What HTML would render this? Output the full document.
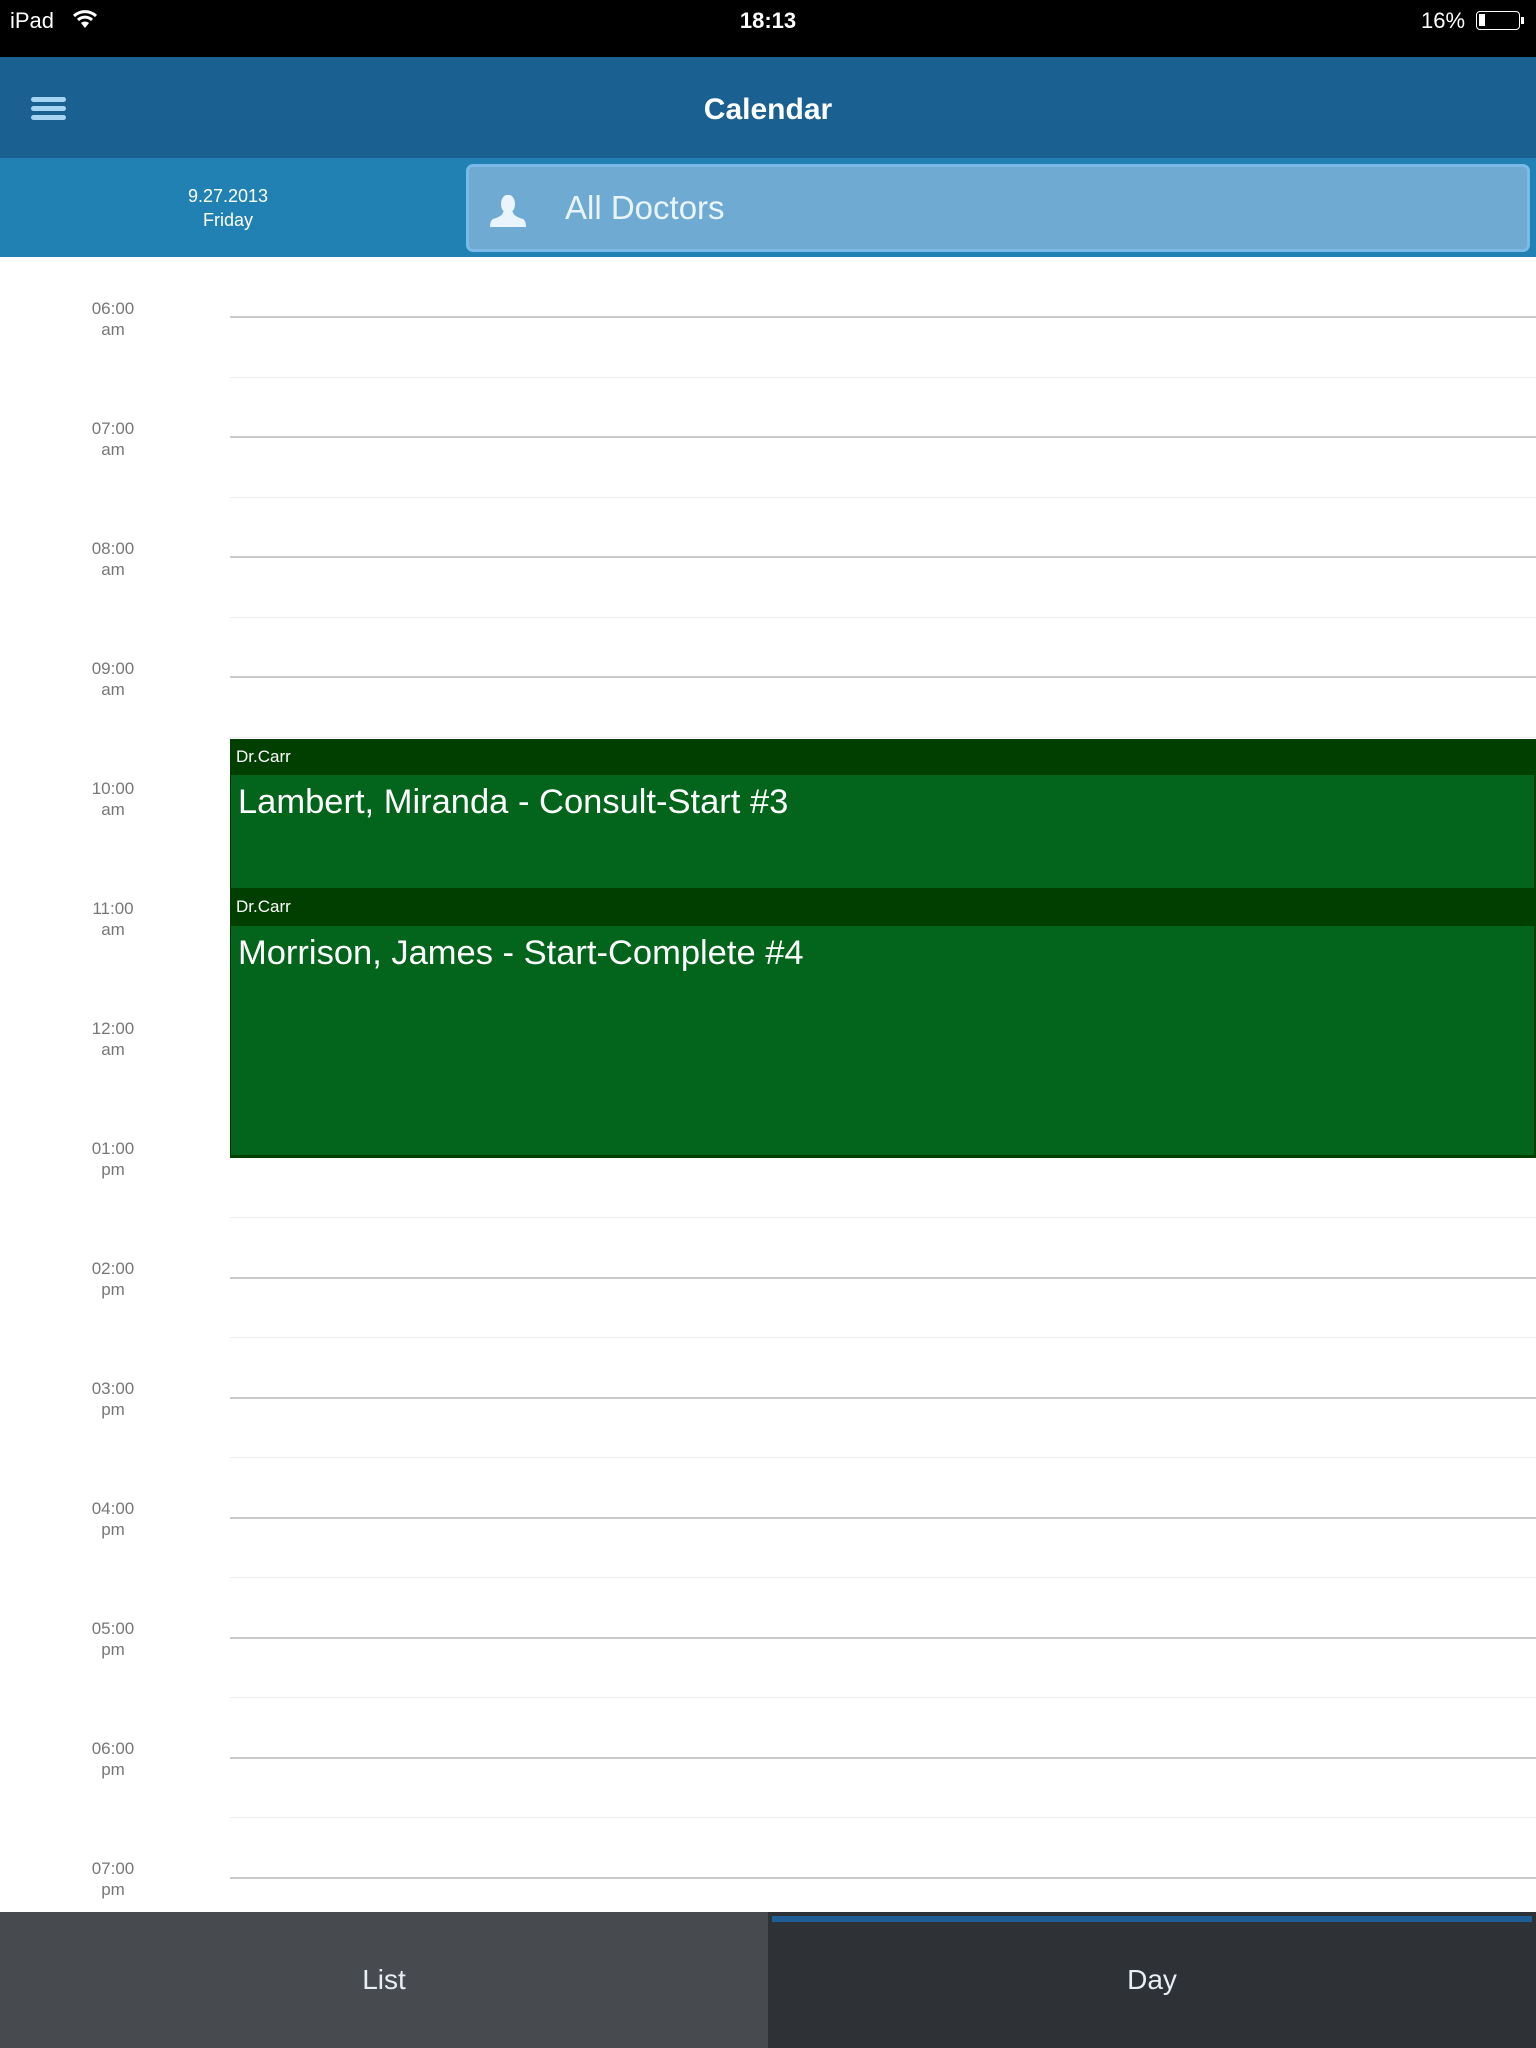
<!DOCTYPE html>
<html><head><meta charset="utf-8"><style>
*{margin:0;padding:0;box-sizing:border-box}
body{width:1536px;height:2048px;position:relative;background:#fff;font-family:"Liberation Sans",sans-serif;overflow:hidden}
.a{position:absolute}
.lbl{position:absolute;left:63px;width:100px;text-align:center;color:#777;font-size:17px;line-height:21px}
.hl{position:absolute;left:230px;right:0;height:2px;background:#c9c9c9}
.ml{position:absolute;left:230px;right:0;height:1px;background:#eeeeee}
</style></head><body>
<div class="a" style="left:0;top:0;width:1536px;height:57px;background:#000"></div>
<div class="a" style="left:10px;top:8px;color:#fff;font-size:22px">iPad</div>
<svg class="a" style="left:72px;top:9px" width="26" height="20" viewBox="0 0 26 20"><path d="M2 7 A16 16 0 0 1 24 7" stroke="#fff" stroke-width="3" fill="none"/><path d="M6 11 A10 10 0 0 1 20 11" stroke="#fff" stroke-width="3" fill="none"/><path d="M9 14 L13 19 L17 14 A6 6 0 0 0 9 14Z" fill="#fff"/></svg>
<div class="a" style="left:0;width:1536px;top:8px;text-align:center;color:#fff;font-size:22px;font-weight:bold">18:13</div>
<div class="a" style="left:1421px;top:8px;color:#fff;font-size:22px">16%</div>
<div class="a" style="left:1476px;top:11px;width:44px;height:19px;border:1.5px solid #fff;border-radius:4px"><div style="position:absolute;left:2px;top:2px;width:6px;height:12px;background:#fff"></div></div>
<div class="a" style="left:1521px;top:17px;width:3px;height:7px;background:#fff"></div>

<div class="a" style="left:0;top:57px;width:1536px;height:101px;background:#1a6090"></div>
<div class="a" style="left:31px;top:97px;width:35px;height:5px;border-radius:3px;background:#a8d4f4"></div>
<div class="a" style="left:31px;top:106px;width:35px;height:5px;border-radius:3px;background:#a8d4f4"></div>
<div class="a" style="left:31px;top:115px;width:35px;height:5px;border-radius:3px;background:#a8d4f4"></div>
<div class="a" style="left:0;width:1536px;top:93px;text-align:center;color:#fff;font-size:30px;font-weight:bold">Calendar</div>

<div class="a" style="left:0;top:158px;width:1536px;height:99px;background:#2181b3"></div>
<div class="a" style="left:128px;width:200px;top:184px;text-align:center;color:#fff;font-size:18px;line-height:24px">9.27.2013<br>Friday</div>
<div class="a" style="left:466px;top:164px;width:1064px;height:88px;background:#6eaad2;border:3px solid #7cb8e8;border-radius:7px"></div>
<svg class="a" style="left:488px;top:195px" width="42" height="32" viewBox="0 0 42 32"><ellipse cx="20" cy="9" rx="7" ry="9.5" fill="#eaf4fc"/><path d="M15 17 Q15 21 5 24 Q2 26 2 32 L38 32 Q38 26 35 24 Q25 21 25 17Z" fill="#eaf4fc"/></svg>
<div class="a" style="left:565px;top:189px;color:#eaf4fc;font-size:33px">All Doctors</div>

<div class="hl" style="top:316px"></div><div class="ml" style="top:377px"></div>
<div class="hl" style="top:436px"></div><div class="ml" style="top:497px"></div>
<div class="hl" style="top:556px"></div><div class="ml" style="top:617px"></div>
<div class="hl" style="top:676px"></div><div class="ml" style="top:737px"></div>
<div class="hl" style="top:796px"></div><div class="ml" style="top:857px"></div>
<div class="hl" style="top:916px"></div><div class="ml" style="top:977px"></div>
<div class="hl" style="top:1036px"></div><div class="ml" style="top:1097px"></div>
<div class="hl" style="top:1156px"></div><div class="ml" style="top:1217px"></div>
<div class="hl" style="top:1277px"></div><div class="ml" style="top:1337px"></div>
<div class="hl" style="top:1397px"></div><div class="ml" style="top:1457px"></div>
<div class="hl" style="top:1517px"></div><div class="ml" style="top:1577px"></div>
<div class="hl" style="top:1637px"></div><div class="ml" style="top:1697px"></div>
<div class="hl" style="top:1757px"></div><div class="ml" style="top:1817px"></div>
<div class="hl" style="top:1877px"></div>

<div class="lbl" style="top:298px">06:00<br>am</div>
<div class="lbl" style="top:418px">07:00<br>am</div>
<div class="lbl" style="top:538px">08:00<br>am</div>
<div class="lbl" style="top:658px">09:00<br>am</div>
<div class="lbl" style="top:778px">10:00<br>am</div>
<div class="lbl" style="top:898px">11:00<br>am</div>
<div class="lbl" style="top:1018px">12:00<br>am</div>
<div class="lbl" style="top:1138px">01:00<br>pm</div>
<div class="lbl" style="top:1258px">02:00<br>pm</div>
<div class="lbl" style="top:1378px">03:00<br>pm</div>
<div class="lbl" style="top:1498px">04:00<br>pm</div>
<div class="lbl" style="top:1618px">05:00<br>pm</div>
<div class="lbl" style="top:1738px">06:00<br>pm</div>
<div class="lbl" style="top:1858px">07:00<br>pm</div>

<div class="a" style="left:230px;top:739px;width:1306px;height:419px;background:#003f00"></div>
<div class="a" style="left:231px;top:775px;width:1303px;height:113px;background:#03651b"></div>
<div class="a" style="left:231px;top:926px;width:1303px;height:229px;background:#03651b"></div>
<div class="a" style="left:236px;top:747px;color:#fff;font-size:17px">Dr.Carr</div>
<div class="a" style="left:238px;top:783px;color:#fff;font-size:34.5px">Lambert, Miranda - Consult-Start #3</div>
<div class="a" style="left:236px;top:897px;color:#fff;font-size:17px">Dr.Carr</div>
<div class="a" style="left:238px;top:934px;color:#fff;font-size:34.5px">Morrison, James - Start-Complete #4</div>

<div class="a" style="left:0;top:1912px;width:768px;height:136px;background:#474b50"></div>
<div class="a" style="left:768px;top:1912px;width:768px;height:136px;background:#2e3135"></div>
<div class="a" style="left:772px;top:1916px;width:760px;height:6px;background:#1f5d96"></div>
<div class="a" style="left:0;width:768px;top:1964px;text-align:center;color:#e8eef4;font-size:28px">List</div>
<div class="a" style="left:768px;width:768px;top:1964px;text-align:center;color:#e8eef4;font-size:28px">Day</div>
</body></html>
